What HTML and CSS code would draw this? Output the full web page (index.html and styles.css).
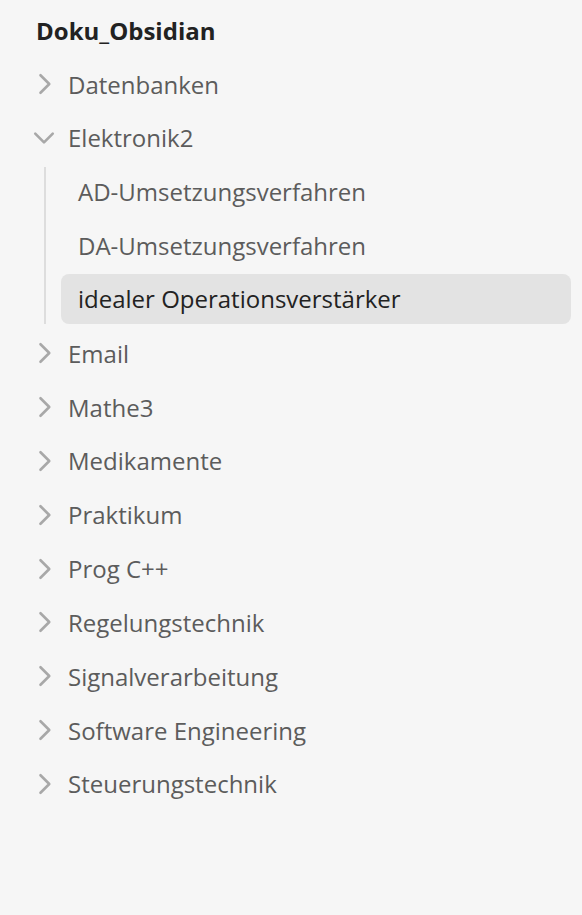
FILE: index.html
```html
<!DOCTYPE html>
<html lang="de">
<head>
<meta charset="utf-8">
<link rel="stylesheet" href="styles.css">
</head>
<body>
<div class="tree">
  <div class="root">Doku_Obsidian</div>
  <div class="folder"><div class="row"><svg class="chev" viewBox="0 0 16 16"><path d="M6 3l5 5-5 5"/></svg><span>Datenbanken</span></div></div>
  <div class="folder open">
    <div class="row"><svg class="chev" viewBox="0 0 16 16"><path d="M3 5.5l5 5 5-5"/></svg><span>Elektronik2</span></div>
    <div class="children">
      <div class="file">AD-Umsetzungsverfahren</div>
      <div class="file">DA-Umsetzungsverfahren</div>
      <div class="file active">idealer Operationsverstärker</div>
    </div>
  </div>
  <div class="folder"><div class="row"><svg class="chev" viewBox="0 0 16 16"><path d="M6 3l5 5-5 5"/></svg><span>Email</span></div></div>
  <div class="folder"><div class="row"><svg class="chev" viewBox="0 0 16 16"><path d="M6 3l5 5-5 5"/></svg><span>Mathe3</span></div></div>
  <div class="folder"><div class="row"><svg class="chev" viewBox="0 0 16 16"><path d="M6 3l5 5-5 5"/></svg><span>Medikamente</span></div></div>
  <div class="folder"><div class="row"><svg class="chev" viewBox="0 0 16 16"><path d="M6 3l5 5-5 5"/></svg><span>Praktikum</span></div></div>
  <div class="folder"><div class="row"><svg class="chev" viewBox="0 0 16 16"><path d="M6 3l5 5-5 5"/></svg><span>Prog C++</span></div></div>
  <div class="folder"><div class="row"><svg class="chev" viewBox="0 0 16 16"><path d="M6 3l5 5-5 5"/></svg><span>Regelungstechnik</span></div></div>
  <div class="folder"><div class="row"><svg class="chev" viewBox="0 0 16 16"><path d="M6 3l5 5-5 5"/></svg><span>Signalverarbeitung</span></div></div>
  <div class="folder"><div class="row"><svg class="chev" viewBox="0 0 16 16"><path d="M6 3l5 5-5 5"/></svg><span>Software Engineering</span></div></div>
  <div class="folder"><div class="row"><svg class="chev" viewBox="0 0 16 16"><path d="M6 3l5 5-5 5"/></svg><span>Steuerungstechnik</span></div></div>
</div>
</body>
</html>
```
FILE: styles.css
```css
html, body {
  margin: 0;
  padding: 0;
  background: #f6f6f6;
  height: 100%;
}
body {
  font-family: "Open Sans", "Noto Sans", sans-serif;
  color: #5c5c5c;
}
.tree {
  padding: 14px 11px 0 36px;
}
.root {
  font-weight: 700;
  font-size: 24px;
  color: #222222;
  height: 34px;
  line-height: 34px;
  margin-bottom: 11px;
}
.row {
  display: flex;
  align-items: center;
  height: 50px;
  margin-bottom: 3.85px;
  font-size: 24px;
  margin-left: -6px;
}
.chev {
  width: 28px;
  height: 28px;
  flex: none;
  margin-right: 10px;
  fill: none;
  stroke: #a8a8a8;
  stroke-width: 1.5;
  stroke-linecap: round;
  stroke-linejoin: round;
}
.children {
  margin-left: 8px;
  border-left: 2px solid #dddddd;
  padding-left: 15px;
}
.file {
  height: 50px;
  line-height: 50px;
  margin-bottom: 3.85px;
  font-size: 24px;
  padding-left: 17px;
  border-radius: 8px;
}
.file.active {
  background: #e3e3e3;
  color: #222222;
}
```
